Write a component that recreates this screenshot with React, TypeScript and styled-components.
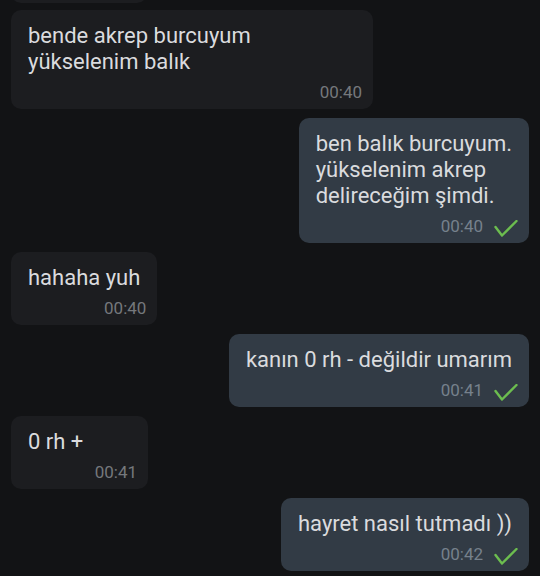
import React from "react";
import styled, { createGlobalStyle } from "styled-components";

const Global = createGlobalStyle`
  html, body { margin: 0; padding: 0; background: #121315; }
  body { width: 540px; height: 576px; overflow: hidden; font-family: Roboto, "Noto Sans", sans-serif; }
`;

const Screen = styled.div`
  width: 540px;
  height: 576px;
  overflow: hidden;
  background: #121315;
`;

const Thread = styled.div`
  display: flex;
  flex-direction: column;
  gap: 9px;
  padding: 0 11px;
  margin-top: -53px;
`;

const Bubble = styled.div<{ $out?: boolean }>`
  align-self: ${(p) => (p.$out ? "flex-end" : "flex-start")};
  min-width: 137px;
  max-width: 362px;
  box-sizing: border-box;
  background: ${(p) => (p.$out ? "#323b45" : "#1c1d20")};
  border-radius: 10px;
  padding: 13px 11px 7px 17px;
  display: flex;
  flex-direction: column;
`;

const Text = styled.div`
  color: #dadbde;
  font-size: 22px;
  line-height: 26px;
  padding-right: 6px;
  white-space: pre-line;
`;

const Meta = styled.div`
  display: flex;
  justify-content: flex-end;
  align-items: center;
  gap: 11px;
  margin-top: 7px;
  height: 20px;
`;

const Time = styled.span<{ $out?: boolean }>`
  font-size: 17px;
  line-height: 20px;
  color: ${(p) => (p.$out ? "#76818c" : "#75787c")};
`;

const Ghost = styled.div`
  align-self: flex-start;
  width: 136px;
  height: 56px;
  margin-bottom: -2px;
  background: #1c1d20;
  border-radius: 10px;
`;

const CheckIcon = styled.svg`
  margin-top: 6px;
  flex: none;
`;

const Check = () => (
  <CheckIcon width="24" height="18" viewBox="0 0 24 18">
    <polyline
      points="1.5,7 8,15.5 22.5,1"
      fill="none"
      stroke="#6cbd4f"
      strokeWidth="2.4"
      strokeLinecap="round"
      strokeLinejoin="round"
    />
  </CheckIcon>
);

type Msg = { text: string; time: string; out?: boolean };

const messages: Msg[] = [
  { text: "bende akrep burcuyum yükselenim balık", time: "00:40" },
  { text: "ben balık burcuyum.\nyükselenim akrep\ndelireceğim şimdi.", time: "00:40", out: true },
  { text: "hahaha yuh", time: "00:40" },
  { text: "kanın 0 rh - değildir umarım", time: "00:41", out: true },
  { text: "0 rh +", time: "00:41" },
  { text: "hayret nasıl tutmadı ))", time: "00:42", out: true },
];

export default function App() {
  return (
    <Screen>
      <Global />
      <Thread>
        <Ghost />
        {messages.map((m, i) => (
          <Bubble key={i} $out={m.out}>
            <Text>{m.text}</Text>
            <Meta>
              <Time $out={m.out}>{m.time}</Time>
              {m.out && <Check />}
            </Meta>
          </Bubble>
        ))}
      </Thread>
    </Screen>
  );
}
